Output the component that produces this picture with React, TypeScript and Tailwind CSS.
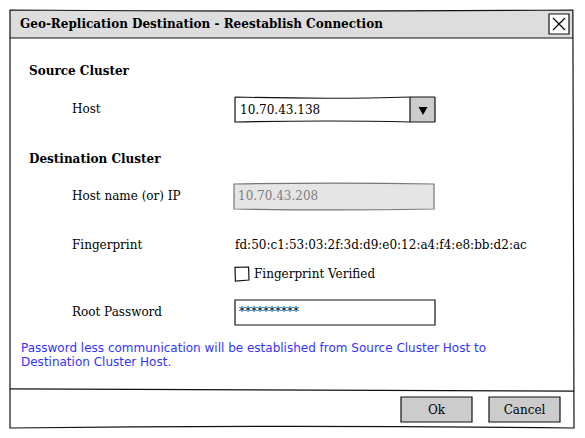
import React, { useState } from 'react';

const STRAIGHT = 'M0 0L100 0L100 100L0 100Z';
const FRAME = 'M0 0Q50 0.5 99.8 0Q99.8 50 100 100Q50 99.2 0 100Z';
const BOWED_IN = 'M0 0Q48 10 88 0L100 0M0 0L0 100Q48 92 88 100L100 100';
const BOWED_OUT = 'M0 0Q50 -7 100 0L100 100Q50 107 0 100Z';
const TICK_BOX = 'M0 3L97 0L100 93L3 100Z';

/** Hand-drawn pen line stretched over its parent's box. */
function Pen({ d = STRAIGHT, stroke = '#111111', fill = 'none' }: { d?: string; stroke?: string; fill?: string }) {
  return (
    <svg
      aria-hidden="true"
      viewBox="0 0 100 100"
      preserveAspectRatio="none"
      className="pointer-events-none absolute inset-0 h-full w-full overflow-visible"
    >
      <path d={d} fill={fill} stroke={stroke} strokeWidth="1.2" vectorEffect="non-scaling-stroke" />
    </svg>
  );
}

function DialogButton({ children }: { children: React.ReactNode }) {
  return (
    <button type="button" className="relative h-[25px] w-[71px] bg-[#cccccc] pt-[2px] text-center">
      {children}
      <Pen />
    </button>
  );
}

export default function App() {
  const [host, setHost] = useState('10.70.43.138');
  const [password, setPassword] = useState('**********');
  const [verified, setVerified] = useState(false);

  return (
    <main className="bg-white p-[10px] pr-[11px] font-['DejaVu_Serif',serif] text-[12px] leading-[16px] text-black">
      <section role="dialog" aria-labelledby="dialog-title" className="relative">
        <header className="relative mr-px flex h-[28px] items-center justify-between bg-[#dddddd] pr-1 pl-[10px]">
          <h1 id="dialog-title" className="font-bold">
            Geo-Replication Destination - Reestablish Connection
          </h1>
          <button type="button" aria-label="Close" className="relative h-5 w-5 bg-white">
            <Pen />
            <svg viewBox="0 0 20 20" className="h-5 w-5" fill="none" stroke="#000000" strokeWidth="1.2">
              <path d="M4 4L16 16M16 4L4 16" />
            </svg>
          </button>
          <Pen d="M0 100L100 100" />
        </header>

        <form id="connection" className="pt-[25px] pb-[21px]" onSubmit={(e) => e.preventDefault()}>
          <h2 className="pl-[19px] font-bold">Source Cluster</h2>
          <div className="mt-[18px] flex items-center pl-[62px]">
            <label htmlFor="host" className="w-[163px] pb-[2px]">
              Host
            </label>
            <div className="relative h-[25px] w-[200px]">
              <select
                id="host"
                value={host}
                onChange={(e) => setHost(e.target.value)}
                className="h-full w-full appearance-none bg-transparent pr-[30px] pl-[5px] outline-none"
              >
                <option>10.70.43.138</option>
              </select>
              <span className="pointer-events-none absolute inset-y-0 right-0 flex w-[25px] items-center justify-center bg-[#cccccc] pt-[2px]">
                <Pen d="M0 0L0 100M100 0L100 100" />
                <svg viewBox="0 0 10 8" className="h-2 w-[10px]" aria-hidden="true">
                  <path d="M0.5 0H9.5L5 8Z" fill="#000000" />
                </svg>
              </span>
              <Pen d={BOWED_IN} />
            </div>
          </div>

          <h2 className="mt-[29px] pl-[19px] font-bold">Destination Cluster</h2>
          <div className="mt-[17px] flex items-center pl-[62px]">
            <label htmlFor="destination" className="w-[162px] pb-[2px]">
              Host name (or) IP
            </label>
            <div className="relative h-[25px] w-[200px]">
              <Pen d={BOWED_OUT} stroke="#777777" fill="#e5e5e5" />
              <input
                id="destination"
                disabled
                value="10.70.43.208"
                className="relative block h-[25px] w-full bg-transparent px-1 pb-[2px] text-[#7f7f7f]"
              />
            </div>
          </div>
          <div className="mt-[28px] flex items-center pl-[62px]">
            <span className="w-[163px]">Fingerprint</span>
            <output>fd:50:c1:53:03:2f:3d:d9:e0:12:a4:f4:e8:bb:d2:ac</output>
          </div>
          <div className="mt-[13px] flex items-center pl-[225px]">
            <label className="flex items-center gap-[5px]">
              <span className="relative h-[14px] w-[14px]">
                <input
                  type="checkbox"
                  checked={verified}
                  onChange={(e) => setVerified(e.target.checked)}
                  className="block h-[14px] w-[14px] appearance-none checked:bg-[#777777]"
                />
                <Pen d={TICK_BOX} />
              </span>
              Fingerprint Verified
            </label>
          </div>
          <div className="mt-[18px] flex items-center pl-[62px]">
            <label htmlFor="password" className="w-[163px] pb-[2px]">
              Root Password
            </label>
            <div className="relative h-[25px] w-[200px]">
              <input
                id="password"
                value={password}
                onChange={(e) => setPassword(e.target.value)}
                className="block h-[25px] w-full bg-transparent px-1 pb-[2px] outline-none"
              />
              <Pen />
            </div>
          </div>
          <p className="mt-4 max-w-[500px] pl-[11px] font-['DejaVu_Sans',sans-serif] leading-[14px] text-[#3333ff]">
            Password less communication will be established from Source Cluster Host to Destination Cluster Host.
          </p>
        </form>

        <footer className="relative flex h-[38px] items-center justify-end gap-[17px] pr-[14px]">
          <Pen d="M0 -3Q45 3 100 3" />
          <DialogButton>Ok</DialogButton>
          <DialogButton>Cancel</DialogButton>
        </footer>
        <Pen d={FRAME} />
      </section>
    </main>
  );
}
